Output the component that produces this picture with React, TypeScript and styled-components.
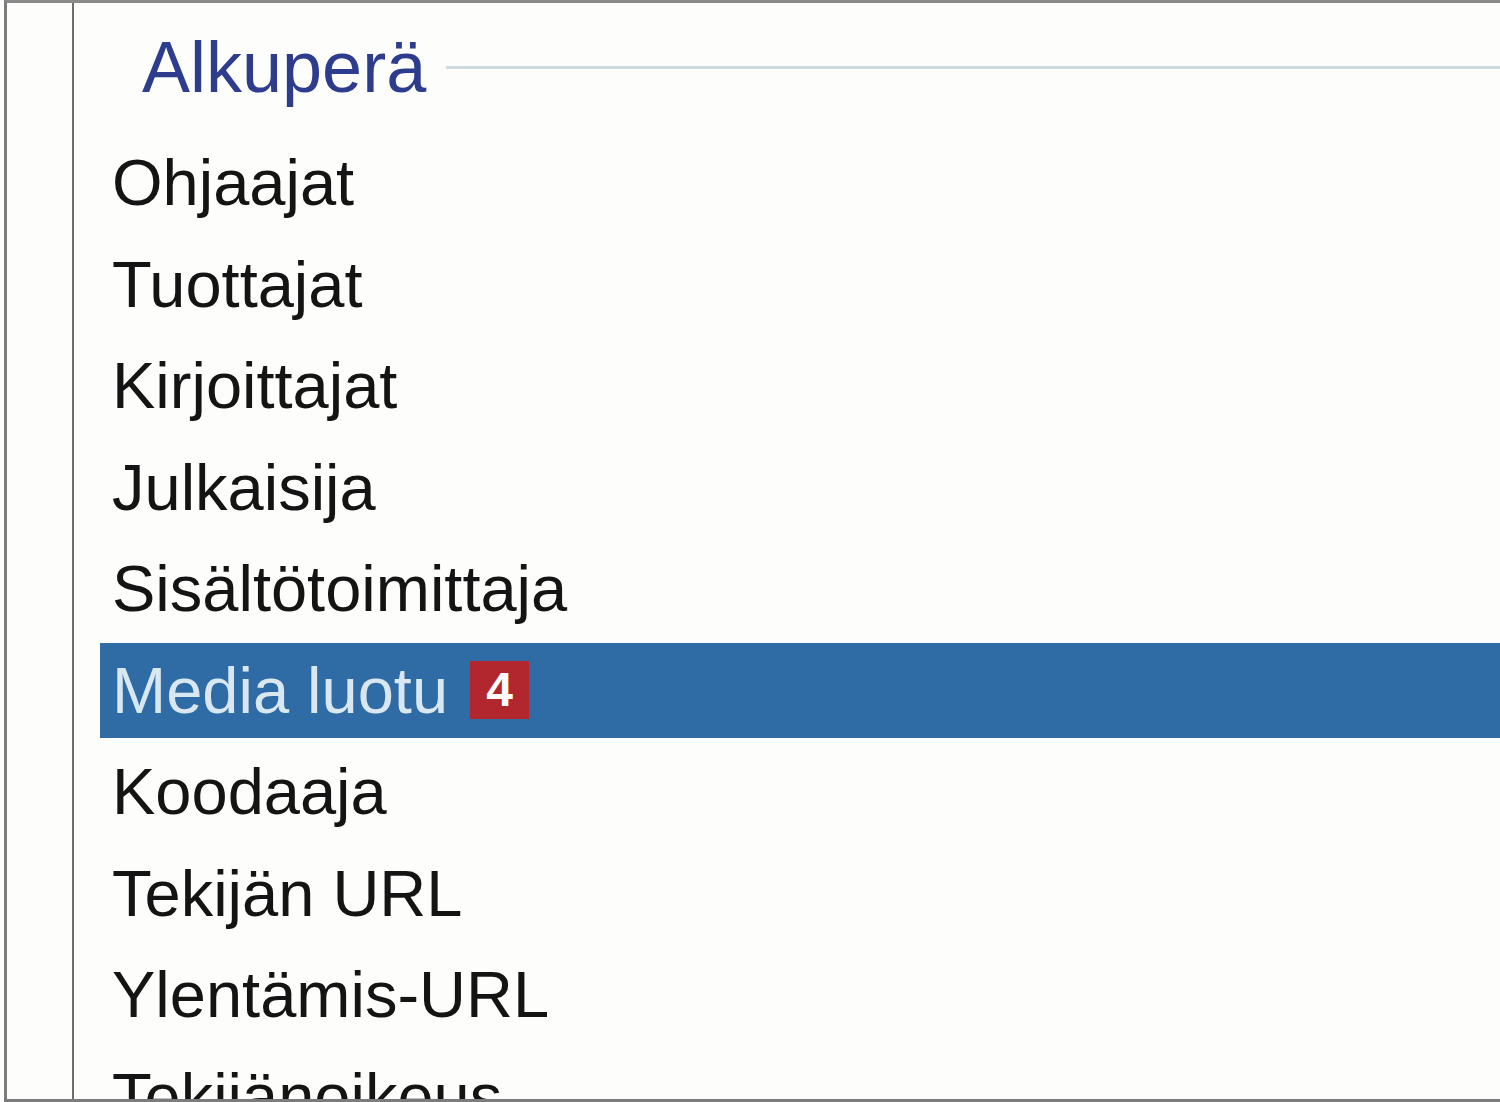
import React from 'react';
import styled, { createGlobalStyle } from 'styled-components';

const GlobalStyle = createGlobalStyle`
    html, body {
        margin: 0;
        padding: 0;
        background: #ffffff;
        overflow: hidden;
    }
`;

// 바깥 테두리
const Frame = styled.div`
    margin-left: 4px;
    height: 1102px;
    box-sizing: border-box;
    border-left: 3px solid #7c7c7c;
    border-top: 3px solid #8a8a8a;
    border-bottom: 3px solid #7c7c7c;
    background: #fdfdfb;
    display: flex;
    overflow: hidden;
    font-family: 'Liberation Sans', Arial, sans-serif;
`;

const Gutter = styled.div`
    width: 65px;
    flex-shrink: 0;
    border-right: 2px solid #6e6e6e;
`;

const Content = styled.div`
    flex: 1;
    padding: 24px 0 0 26px;
    display: flex;
    flex-direction: column;
`;

const Header = styled.div`
    display: flex;
    align-items: center;
    padding-left: 42px;
    margin-bottom: 28px;
`;

const HeaderTitle = styled.span`
    font-size: 72px;
    line-height: 80px;
    color: #2e3c8e;
    white-space: nowrap;
`;

const HeaderLine = styled.div`
    flex: 1;
    height: 3px;
    margin-left: 20px;
    background: #cfdae0;
`;

const List = styled.div`
    display: flex;
    flex-direction: column;
    gap: 6.5px;
`;

const Row = styled.div<{ selected?: boolean }>`
    display: flex;
    align-items: center;
    height: 95px;
    padding-left: 12px;
    font-size: 65px;
    line-height: 95px;
    white-space: nowrap;
    color: ${(p) => (p.selected ? '#d8e7f0' : '#141414')};
    background: ${(p) => (p.selected ? '#2f6ba5' : 'transparent')};
    flex-shrink: 0;
`;

const Badge = styled.span`
    display: inline-flex;
    align-items: center;
    justify-content: center;
    width: 59px;
    height: 58px;
    margin-left: 22px;
    background: #b1272d;
    color: #ffffff;
    font-weight: bold;
    font-size: 48px;
    line-height: 58px;
`;

const items = [
    'Ohjaajat',
    'Tuottajat',
    'Kirjoittajat',
    'Julkaisija',
    'Sisältötoimittaja',
    'Media luotu',
    'Koodaaja',
    'Tekijän URL',
    'Ylentämis-URL',
    'Tekijänoikeus',
];

const App: React.FC = () => {
    const selected = 'Media luotu';
    return (
        <>
            <GlobalStyle />
            <Frame>
                <Gutter />
                <Content>
                    <Header>
                        <HeaderTitle>Alkuperä</HeaderTitle>
                        <HeaderLine />
                    </Header>
                    <List>
                        {items.map((name) => (
                            <Row key={name} selected={name === selected}>
                                {name}
                                {name === selected && <Badge>4</Badge>}
                            </Row>
                        ))}
                    </List>
                </Content>
            </Frame>
        </>
    );
};

export default App;
